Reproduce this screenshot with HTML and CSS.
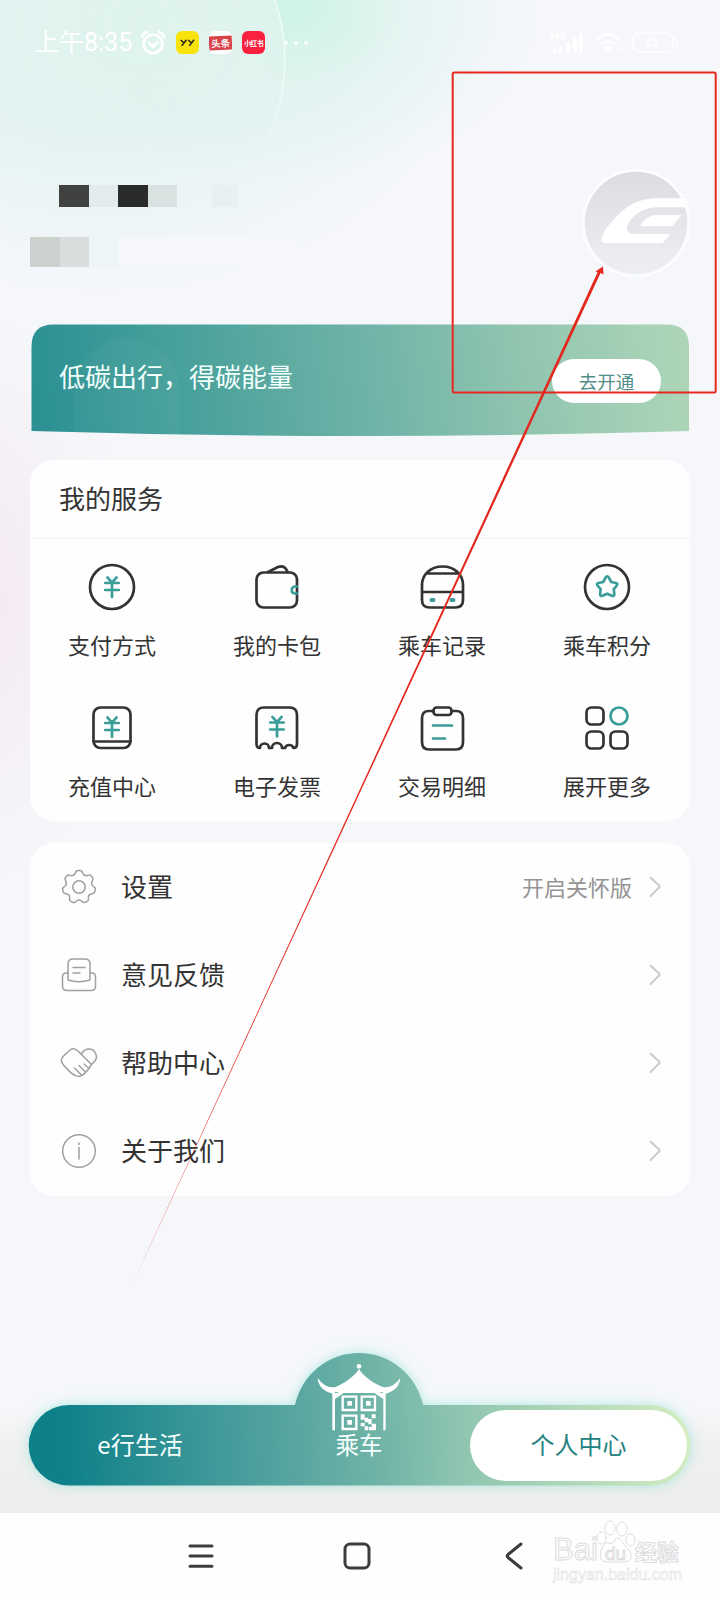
FILE: index.html
```html
<!DOCTYPE html>
<html lang="zh-CN">
<head>
<meta charset="utf-8">
<title>个人中心</title>
<link rel="stylesheet" href="styles.css">
</head>
<body>
<svg width="0" height="0" class="defs">
  <defs>
    <g id="yuan"><path d="M-4.6-9.6 0-4.300 4.600-9.600M-6.800-4H6.800M-6.800 3H6.800M0-4.300V10"/></g>
    <path id="chev" d="M1.5 1.5 10.2 9.6Q11 10.5 10.2 11.4L1.5 20"/>
    <path id="tooth" d="M13.360 7.290Q14.980 6.510 15.400 4.800Q16 2.500 18 2.500H20Q22 2.500 22.600 4.800Q23.020 6.510 24.640 7.290"/>
  </defs>
</svg>
<div class="phone">
  <div class="halo"></div>
  <header class="status">
    <span class="time">上午8:35</span>
    <svg class="alarm" width="26" height="26" viewBox="0 0 26 26"><circle cx="13" cy="14" r="9.3"/><path d="M2 6.5Q3.5 3 7 2M24 6.5Q22.500 3 19 2M9 13l4 3.500 4.500-4.500"/></svg>
    <span class="app app-yy"><svg width="15" height="8" viewBox="0 0 15 8"><path d="M.7 1 4 4M6.600 .8 1.700 6.800M8.300 1 11.500 4M14 .8 9.300 6.800"/></svg></span>
    <span class="app app-tt"><b>头条</b></span>
    <span class="app app-xhs">小红书</span>
    <span class="dots"><i></i><i></i><i></i></span>
    <span class="grow"></span>
    <svg class="sys" width="130" height="26" viewBox="0 0 130 26">
      <path d="M2 2v7M7 2v7M2 5.500h5M10 2v7h1.500q3-.5 3-3.500T11.500 2z" stroke-width="1.600"/>
      <path d="M5 20v3M11 17v6M18 13v10M25 8v15M31 3v20" stroke-width="4"/>
      <path d="M47 9q11-9 22 0M51 14q7-5.500 14 0M55 18q3-2 6 0l-3 3.500z" stroke-width="2.600"/>
      <path d="M66 21l3-4 3 4" stroke-width="1.500"/>
      <rect x="83" y="3" width="40" height="19" rx="6" stroke-width="1.600"/><path d="M126.500 9v7" stroke-width="2"/>
      <text x="102" y="17">52</text>
    </svg>
  </header>

  <section class="profile">
    <div class="user">
      <div class="mosaic name"><i class="m1"></i><i class="m2"></i><i class="m3"></i><i class="m4"></i><i class="m5"></i></div>
      <div class="mosaic number"><i class="n1"></i><i class="n2"></i><i class="n3"></i><i class="n4"></i></div>
    </div>
    <svg class="avatar" width="112" height="112" viewBox="660 503 336 336">
      <defs><linearGradient id="av" x1="0" y1="0" x2="0" y2="1"><stop offset="0" stop-color="#dcdde0"/><stop offset="1" stop-color="#eeeff2"/></linearGradient></defs>
      <circle cx="828" cy="671" r="163" fill="#fcfdfe"/><circle cx="828" cy="671" r="154" fill="url(#av)"/>
      <path fill="#fff" d="M724 722Q728 694 768 653C801 617 840 597 892 597H982V624H890C852 626 824 641 806 672C795 690 802 704 819 704H932L907 732H738Q726 732 724 722Z"/>
      <path fill="#fff" d="M840 681C851 660 868 647 890 647H965L937 681Z"/>
    </svg>
  </section>

  <section class="banner">
    <svg class="banner-bg" width="658" height="112" viewBox="0 0 658 112">
      <defs><linearGradient id="bg" gradientUnits="userSpaceOnUse" x1="10" y1="70" x2="640" y2="-10"><stop offset="0" stop-color="#2d9193"/><stop offset=".28" stop-color="#4fa49d"/><stop offset=".53" stop-color="#72b4a9"/><stop offset=".76" stop-color="#91c5b0"/><stop offset="1" stop-color="#acd5b7"/></linearGradient></defs>
      <path fill="url(#bg)" d="M.5 22.500Q.5 .5 22.500 .5H636Q658 .5 658 22.500V107Q329 117 .5 107Z"/>
      <path fill="#fff" opacity=".03" d="M44 109V66A52 52 0 0 1 148 66V111Z"/>
    </svg>
    <span class="banner-text">低碳出行，得碳能量</span>
    <span class="pill">去开通</span>
  </section>

  <section class="card services">
    <h2>我的服务</h2>
    <div class="grid">
      <div class="cell"><svg class="ic" width="48" height="48" viewBox="0 0 48 48"><circle cx="24" cy="24" r="22"/><use href="#yuan" x="24" y="24" class="teal"/></svg><span>支付方式</span></div>
      <div class="cell"><svg class="ic" width="48" height="48" viewBox="0 0 48 48"><rect x="3.500" y="9.500" width="40.500" height="35" rx="7"/><path d="M15 9 25 4Q32 1.500 34.500 9"/><path class="teal" d="M44 23.500H41.500A3.600 3.600 0 0 0 41.500 30.500H44"/></svg><span>我的卡包</span></div>
      <div class="cell"><svg class="ic" width="48" height="48" viewBox="0 0 48 48"><path d="M4 22C4 12 12 3.500 24.500 3.500S45 12 45 22V37Q45 44.500 37.500 44.500H11.500Q4 44.500 4 37ZM9.500 10.500H39.500M4 29H45"/><path class="teal thick" d="M13.500 37h2M33.500 37h2"/></svg><span>乘车记录</span></div>
      <div class="cell"><svg class="ic" width="48" height="48" viewBox="0 0 48 48"><circle cx="24" cy="24" r="22"/><path class="teal" d="M22.700 14.300Q24.200 12.200 25.700 14.300L28.200 19L33 20Q35.200 20.800 33.800 22.500L30.800 26.200L31.300 31.300Q31.100 33.600 28.800 32.800L24.200 30.800L19.500 32.800Q17.300 33.600 17.100 31.300L17.600 26.200L14.500 22.500Q13.200 20.800 15.400 20L20.200 19Z"/></svg><span>乘车积分</span></div>
      <div class="cell"><svg class="ic" width="48" height="48" viewBox="0 0 48 48"><rect x="5.500" y="3.500" width="37" height="40.500" rx="7"/><path d="M5.500 37.500H42.500"/><use href="#yuan" x="24" y="23" class="teal"/></svg><span>充值中心</span></div>
      <div class="cell"><svg class="ic" width="48" height="48" viewBox="0 0 48 48"><path d="M7 44Q3.500 44 3.500 40V11Q3.500 3.500 11 3.500H36.500Q44 3.500 44 11V40Q44 44 40.500 44A4.500 4.500 0 0 0 32 44H29A5 5 0 0 0 19 44H16A4.500 4.500 0 0 0 7 44Z"/><use href="#yuan" x="24" y="22.500" class="teal"/></svg><span>电子发票</span></div>
      <div class="cell"><svg class="ic" width="48" height="48" viewBox="0 0 48 48"><path d="M15.500 7H11Q4 7 4 14V38Q4 45.500 11 45.500H38Q45 45.500 45 38V14Q45 7 38 7H33.500"/><rect x="15.500" y="3.500" width="18" height="7.500" rx="3"/><path class="teal" d="M15 21.500H34M15 34.500H27"/></svg><span>交易明细</span></div>
      <div class="cell"><svg class="ic" width="48" height="48" viewBox="0 0 48 48"><rect x="3.500" y="3.500" width="17" height="17" rx="5"/><circle class="teal" cx="36" cy="12" r="8.500"/><rect x="3.500" y="27.500" width="17" height="17" rx="5"/><rect x="27.500" y="27.500" width="17" height="17" rx="5"/></svg><span>展开更多</span></div>
    </div>
  </section>

  <section class="card list">
    <div class="row"><svg class="li" width="38" height="38" viewBox="0 0 38 38"><use href="#tooth"/><use href="#tooth" transform="rotate(51.430 19 19)"/><use href="#tooth" transform="rotate(102.860 19 19)"/><use href="#tooth" transform="rotate(154.290 19 19)"/><use href="#tooth" transform="rotate(205.710 19 19)"/><use href="#tooth" transform="rotate(257.140 19 19)"/><use href="#tooth" transform="rotate(308.570 19 19)"/><circle cx="19" cy="19" r="6.200"/></svg><span class="label">设置</span><span class="extra">开启关怀版</span><svg class="chev" width="12" height="22" viewBox="0 0 12 22"><use href="#chev"/></svg></div>
    <div class="row"><svg class="li" width="38" height="38" viewBox="0 0 38 38"><path d="M8 17H6.500Q2.500 17 2.500 21V30Q2.500 34.500 7 34.500H31Q35.500 34.500 35.500 30V21Q35.500 17 31.500 17H30"/><path d="M8 24V8Q8 3 13 3H25Q30 3 30 8V24Q19 27.500 8 24ZM13 11.500H25M13 17H20"/></svg><span class="label">意见反馈</span><svg class="chev" width="12" height="22" viewBox="0 0 12 22"><use href="#chev"/></svg></div>
    <div class="row"><svg class="li" width="38" height="38" viewBox="0 0 38 38"><path d="M10 6Q14 3 18 7L31.500 20.500M31.500 20.500Q38 15 36 10.500C34 4 26 2.500 21.500 9.500M10 6 3 12.500Q-.5 16.500 3.500 21C8 26 13 32.500 19 32.500Q25 31.500 31.500 20.500M14.500 24 21 30.500M19 21.500 25.500 28M24 20 29 24.500"/></svg><span class="label">帮助中心</span><svg class="chev" width="12" height="22" viewBox="0 0 12 22"><use href="#chev"/></svg></div>
    <div class="row"><svg class="li" width="38" height="38" viewBox="0 0 38 38"><circle cx="19" cy="19" r="16.300"/><path d="M19 15.500V27M19 11V12.500"/></svg><span class="label">关于我们</span><svg class="chev" width="12" height="22" viewBox="0 0 12 22"><use href="#chev"/></svg></div>
  </section>

  <nav class="tabs">
    <svg class="tabs-bg" width="720" height="180" viewBox="0 0 720 180">
      <defs><linearGradient id="tb" gradientUnits="userSpaceOnUse" x1="60" y1="112" x2="684" y2="62"><stop offset="0" stop-color="#0d8089"/><stop offset=".25" stop-color="#41999a"/><stop offset=".5" stop-color="#6fb3a7"/><stop offset=".63" stop-color="#8dc4b0"/><stop offset="1" stop-color="#d3ecc0"/></linearGradient></defs>
      <path fill="url(#tb)" d="M69 75H295A65.400 65.400 0 0 1 423 75H650A40.300 40.300 0 0 1 650 155.600H69A40.300 40.300 0 0 1 69 75Z"/>
    </svg>
    <span class="tab">e行生活</span>
    <span class="tab ride">
      <svg width="84" height="69" viewBox="80 70 252 207" fill="#fff">
        <circle cx="206" cy="80" r="7"/>
        <path d="M206 88C190 114 155 134 136 142Q105 148 82 115Q84 150 126 162H134V156L148 160H264L278 156V162H287Q327 150 330 115Q306 148 277 142C256 134 222 114 206 88Z"/>
        <path d="M126 158H134V272H126ZM279 158H286V272H279ZM134 160H160L134 178ZM279 160H252L279 178Z"/>
        <path fill="none" stroke="#fff" stroke-width="7" d="M157 171H198V211H157ZM214 171H254V211H214ZM157 228H198V268H157Z"/>
        <path d="M171 184H185V198H171ZM227 184H241V198H227ZM171 241H185V255H171ZM211 224H223V234H234V248H223V240H211ZM244 224H256V236H244ZM234 238H244V254H234ZM211 250H223V260H211ZM223 260H234V272H223ZM244 252H257V272H236V262H244Z"/>
      </svg>
      <span>乘车</span>
    </span>
    <span class="tab active">个人中心</span>
  </nav>

  <footer class="sysnav">
    <svg width="26" height="26" viewBox="0 0 26 26"><path d="M2 3H24M2 13H24M2 23.300H24"/></svg>
    <svg width="28" height="28" viewBox="0 0 28 28"><rect x="2" y="2" width="24" height="24" rx="5"/></svg>
    <svg width="18" height="28" viewBox="0 0 18 28"><path d="M16 2 3 12.500Q1.500 14 3 15.500L16 26"/></svg>
    <div class="mark">
      <svg class="paw" width="40" height="44" viewBox="0 0 40 44"><ellipse cx="14" cy="8" rx="5" ry="7"/><ellipse cx="26" cy="9" rx="5" ry="7"/><ellipse cx="5.500" cy="18" rx="4.500" ry="6"/><ellipse cx="34.500" cy="20" rx="4.500" ry="6"/><path d="M20 18Q25 18 27 23T34 31Q38 41 29 42H10Q2 41 5 31T13 23T20 18Z"/></svg>
      <div class="brand"><span class="bai">Bai</span><span class="du">du</span><span class="jy">经验</span></div>
      <div class="site">jingyan.baidu.com</div>
    </div>
  </footer>

  <svg class="notes" width="720" height="1600" viewBox="0 0 720 1600">
    <rect x="452.700" y="72.500" width="263" height="320" rx="1.500" fill="none" stroke="#e8281e" stroke-width="2"/>
    <path fill="#e3281e" d="M132 1285 600.500 273 603.500 274.500 603 266.500 595.500 271.500 597.600 272.300Z"/>
  </svg>
</div>
</body>
</html>
```

FILE: styles.css
```css
* { box-sizing: border-box; }
body {
  margin: 0;
  font-family: "Noto Sans CJK SC", "Noto Sans", sans-serif;
  color: #333;
}
.defs { position: absolute; }
.phone {
  position: relative;
  display: flex;
  flex-direction: column;
  width: 720px;
  height: 1600px;
  overflow: hidden;
  background:
    radial-gradient(ellipse 240px 170px at 295px 10px, #cff3e7 0, rgba(218,243,236,.5) 45%, rgba(240,247,249,0) 100%),
    radial-gradient(ellipse 380px 290px at 100px 0, #e0f2ef 0, #e4f3f1 45%, rgba(235,245,246,0) 100%),
    radial-gradient(ellipse 150px 280px at -20px 600px, #f5e9f1 0, rgba(245,236,244,0) 100%),
    #f5f7fb;
}
.halo {
  position: absolute;
  left: -74px;
  top: -120px;
  width: 360px;
  height: 360px;
  border-radius: 50%;
  background: radial-gradient(circle at 60% 40%, #dff3ed 0, rgba(225,243,239,.8) 40%, rgba(232,244,243,0) 72%);
  border-right: 2px solid rgba(240,251,248,.85);
  -webkit-mask-image: linear-gradient(#000 55%, transparent 80%);
  mask-image: linear-gradient(#000 55%, transparent 80%);
}
.status {
  position: relative;
  display: flex;
  align-items: center;
  height: 85px;
  padding: 0 40px 0 34px;
}
.time { width: 106px; font: 400 25px/34px Roboto, "Noto Sans CJK SC", sans-serif; color: #fff; white-space: nowrap; }
.alarm { fill: none; stroke: #fff; stroke-width: 2.8; stroke-linecap: round; }
.app {
  display: flex;
  align-items: center;
  justify-content: center;
  flex: none;
  width: 23px;
  height: 23px;
  margin-left: 10px;
  border-radius: 6px;
  color: #fff;
  overflow: hidden;
  white-space: nowrap;
}
.app-yy { background: #fae30b; }
.app-yy svg { fill: none; stroke: #222; stroke-width: 1.5; }
.app-tt { background: #fff; }
.app-tt b { padding: 0 2px; font-size: 9.500px; line-height: 14px; background: #d9434b; transform: rotate(-3deg); }
.app-xhs { background: #fa2140; font-size: 7px; font-weight: 700; letter-spacing: -.6px; }
.dots { display: flex; gap: 6px; margin-left: 19px; }
.dots i { width: 4px; height: 4px; border-radius: 50%; background: #fff; opacity: .85; }
.grow { flex: 1; }
.sys { fill: none; stroke: #fff; }
.sys text { font: 700 12px Roboto, sans-serif; fill: #fff; stroke: none; text-anchor: middle; }

.profile { position: relative; display: flex; justify-content: space-between; height: 239px; padding: 100px 28px 0 30px; }
.mosaic { display: flex; }
.mosaic i { width: 29.600px; }
.name { height: 22px; margin: 0 0 30px 29px; }
.number { height: 30px; }
.m1 { background: #40423f; }
.m2 { background: #e4ebed; }
.m3 { background: #2a2c2b; }
.m4 { background: #d9e1e1; }
.name .m5 { width: 26px; margin-left: 35px; background: #e7f1f1; }
.n1 { background: #cbd1cd; }
.n2 { background: #d9dddd; }
.n3 { background: #eef5f7; }
.number .n4 { width: 180px; background: #f5f7fb; }
.avatar { margin-top: -18px; }

.banner { position: relative; display: flex; align-items: flex-start; justify-content: space-between; height: 112px; margin: 0 31px; padding: 0 28px; }
.banner-bg { position: absolute; left: 0; top: 0; }
.banner-text { position: relative; margin-top: 33px; font-size: 26px; line-height: 38px; color: #f3fffc; }
.pill { position: relative; width: 109px; height: 44px; margin-top: 35px; border-radius: 22px; background: #fff; text-align: center; font-size: 18.500px; line-height: 44px; color: #508e87; }

.card { position: relative; margin: 24px 30px 0; border-radius: 24px; background: #fefefe; }
.services { height: 361px; }
.services h2 { height: 79px; margin: 0; padding-left: 29px; border-bottom: 1px solid #f5f5f7; font-size: 26px; font-weight: 400; line-height: 76px; }
.grid { display: grid; grid-template-columns: repeat(4, 1fr); grid-auto-rows: 141px; padding-top: 24px; }
.cell { display: flex; flex-direction: column; align-items: center; padding-right: 1px; }
.cell span { margin-top: 17px; font-size: 22px; line-height: 32px; }
.ic { fill: none; stroke: #333; stroke-width: 2.7; stroke-linecap: round; stroke-linejoin: round; }
.teal { stroke: #3a9d98; }
.thick { stroke-width: 4; }

.list { height: 353px; margin-top: 22px; }
.row { display: flex; align-items: center; height: 88px; padding: 0 29px 0 30px; }
.li { fill: none; stroke: #a0a0a0; stroke-width: 1.5; stroke-linecap: round; stroke-linejoin: round; }
.label { flex: 1; margin: -2px 0 0 23px; font-size: 26px; line-height: 38px; }
.extra { margin: -2px 17px 0 0; font-size: 22px; line-height: 32px; color: #949494; }
.chev { fill: none; stroke: #c7c7c9; stroke-width: 1.8; stroke-linecap: round; }

.tabs {
  position: relative;
  display: flex;
  height: 183px;
  margin-top: 134px;
  padding: 75px 31px 0 29px;
  background: linear-gradient(rgba(244,246,249,0) 76px, #f7f7f9 82px, #f0f1f2 106px, #ededed 183px);
}
.tabs-bg { position: absolute; left: 0; top: 0; filter: drop-shadow(0 0 6px rgba(125,222,203,.6)); }
.tab { position: relative; width: 222px; height: 81px; font-size: 24px; line-height: 78px; text-align: center; color: #f6fffd; }
.ride { display: flex; flex-direction: column; align-items: center; width: 216px; margin-top: -42px; height: 100px; line-height: 24px; font-size: 23.500px; }
.ride > svg { flex: none; margin-left: 0; }
.active { width: 217px; height: 71px; margin: 5px 0 0 3px; border-radius: 36px; background: #fefffe; line-height: 68px; color: #23817f; }

.sysnav { position: relative; display: flex; align-items: center; height: 87px; padding: 0 0 1px 188px; background: #fefefe; }
.sysnav > svg { flex: none; fill: none; stroke: #3c3c3e; stroke-width: 3; stroke-linecap: round; stroke-linejoin: round; }
.sysnav > svg:nth-of-type(2) { margin-left: 129px; }
.sysnav > svg:nth-of-type(3) { margin-left: 134px; }
.mark { position: relative; width: 130px; height: 66px; margin: -6px 0 0 30px; font-family: "Liberation Sans", "Noto Sans CJK SC", sans-serif; color: #fff; -webkit-text-stroke: 1px #dcdcde; }
.paw { position: absolute; left: 43px; top: 0; fill: #fff; stroke: #dcdcde; stroke-width: 1; }
.brand { position: relative; display: flex; align-items: baseline; padding-top: 14px; line-height: 32px; height: 45px; font-size: 28px; font-weight: 400; white-space: nowrap; }
.bai { width: 52px; font-size: 31px; }
.du { width: 30px; font-size: 19px; }
.jy { font-size: 22px; font-weight: 700; }
.site { position: relative; font-size: 16px; line-height: 19px; -webkit-text-stroke: .5px #dcdcde; }
.notes { position: absolute; left: 0; top: 0; pointer-events: none; }
```
